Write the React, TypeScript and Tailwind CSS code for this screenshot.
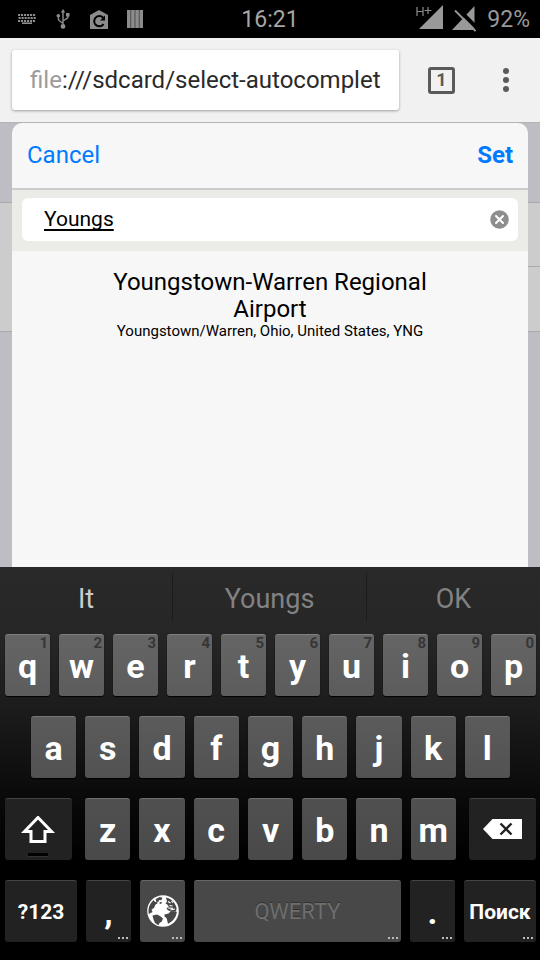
import type { ReactNode } from "react";

const topRow = ["q", "w", "e", "r", "t", "y", "u", "i", "o", "p"];
const homeRow = ["a", "s", "d", "f", "g", "h", "j", "k", "l"];
const bottomRow = ["z", "x", "c", "v", "b", "n", "m"];

function KeyboardIcon() {
  return (
    <svg width="18" height="10" viewBox="0 0 18 10" fill="#8c8c8c" aria-hidden="true">
      {[0, 3, 6].map((y, row) =>
        [0, 1, 2, 3, 4, 5].map((i) => (
          <rect key={`${y}-${i}`} x={i * 3 + (row === 1 ? 0.6 : 0)} y={y} width="2.1" height="2" />
        )),
      )}
      <rect x="4" y="8.4" width="10" height="1.6" />
    </svg>
  );
}

function UsbIcon() {
  return (
    <svg width="14" height="20" viewBox="0 0 14 20" fill="none" stroke="#8c8c8c" strokeWidth="1.4" aria-hidden="true">
      <path d="M7 17V3M7 14.5L2.5 11V7M7 12l4.8-3.2V6" />
      <path d="M7 0l2.2 3.4H4.8z" fill="#8c8c8c" stroke="none" />
      <circle cx="7" cy="17.4" r="2.4" fill="#8c8c8c" stroke="none" />
      <circle cx="2.3" cy="6.8" r="1.8" fill="#8c8c8c" stroke="none" />
      <path d="M10 4h3.5v3.5H10z" fill="#8c8c8c" stroke="none" />
    </svg>
  );
}

function HouseRefreshIcon() {
  return (
    <svg width="20" height="19" viewBox="0 0 20 19" aria-hidden="true">
      <path d="M1 5L10 0l9 5v14H1z" fill="#8c8c8c" />
      <path d="M14.200 7.600A5.200 5.200 0 1 0 14.600 14.200" fill="none" stroke="#000" strokeWidth="2" />
      <path d="M16 5.500v5h-5z" fill="#000" />
    </svg>
  );
}

function BarsIcon() {
  return (
    <svg width="16" height="18" viewBox="0 0 16 18" aria-hidden="true">
      <path d="M0 0h16v18H0z" fill="#5c5c5c" />
      <path d="M0 0h3v18H0zM4.300 0h3v18h-3zM8.600 0h3v18h-3zM13 0h3v18h-3z" fill="#8c8c8c" />
    </svg>
  );
}

function StatusBar() {
  return (
    <header className="grid h-[38px] grid-cols-[1fr_auto_1fr] items-center bg-black text-[23px] text-[#999]">
      <div className="flex items-center pl-[18px]">
        <KeyboardIcon />
        <span className="ml-5 flex"><UsbIcon /></span>
        <span className="ml-[19px] flex"><HouseRefreshIcon /></span>
        <span className="ml-[18px] flex"><BarsIcon /></span>
      </div>
      <time className="pt-[3px] text-[#a6a6a6]">16:21</time>
      <div className="flex items-center justify-end pr-[10px]">
        <svg width="28" height="26" viewBox="0 0 28 26" className="mb-[2px]" aria-label="H+ signal" role="img">
          <path d="M1 2v9M7 2v9M1 6.500h6M8.500 5.500h7M12 2v7" fill="none" stroke="#8c8c8c" strokeWidth="1.200" />
          <path d="M27 0v24H3z" fill="#999" />
        </svg>
        <svg width="24" height="26" viewBox="0 0 24 26" className="ml-2" aria-label="No signal" role="img">
          <path d="M22.500 0v24H0z" fill="#999" />
          <path d="M5.500 2.500L26 23" stroke="#000" strokeWidth="4" />
          <path d="M3 4.500L23.500 25" stroke="#999" strokeWidth="1.800" />
        </svg>
        <span className="ml-[11px] pt-[3px]">92%</span>
      </div>
    </header>
  );
}

function BrowserBar() {
  return (
    <div className="flex h-[84px] items-center bg-[#f1f1f1] pl-3 pr-6">
      <label className="flex h-[60px] min-w-0 flex-1 items-center rounded-[3px] bg-white pl-[18px] text-2xl shadow-[0_1px_3px_rgba(0,0,0,0.35)]">
        <span className="text-[#9b9b9b]">file</span>
        <input
          aria-label="Address"
          defaultValue=":///sdcard/select-autocomplet"
          className="h-full min-w-0 flex-1 bg-transparent text-[#2a2a2a] outline-none"
        />
      </label>
      <button
        aria-label="Open tabs"
        className="ml-[29px] flex h-[27px] w-[27px] items-center justify-center rounded-[3px] border-3 border-[#5a5a5a] text-lg font-bold leading-none text-[#5a5a5a]"
      >
        1
      </button>
      <button aria-label="Menu" className="ml-[41px] flex w-5 flex-col items-center gap-[3px]">
        <span className="h-[6px] w-[6px] rounded-full bg-[#5a5a5a]" />
        <span className="h-[6px] w-[6px] rounded-full bg-[#5a5a5a]" />
        <span className="h-[6px] w-[6px] rounded-full bg-[#5a5a5a]" />
      </button>
    </div>
  );
}

function Gutter({ divided = false }: { divided?: boolean }) {
  return (
    <div className="w-3 shrink-0 pt-[79px]">
      <div className="h-[130px] border-y border-[#a9a9ad] bg-[#ccc]">
        {divided && <div className="h-16 border-b border-[#a9a9ad]" />}
      </div>
    </div>
  );
}

function AirportPicker() {
  return (
    <main className="flex h-[445px] border-t border-[#b4b4b7] bg-[#bebdc3]">
      <Gutter />
      <section className="min-w-0 flex-1 rounded-t-[10px] bg-[#f7f7f7]">
        <div className="flex h-[67px] items-center justify-between border-b-2 border-[#cbcbcb] px-[15px] pb-[2px] text-2xl text-[#007aff]">
          <button>Cancel</button>
          <button className="font-bold">Set</button>
        </div>
        <div className="bg-[#ebece7] px-[10px] pb-[10px] pt-2">
          <div className="flex h-[43px] items-center rounded-md bg-white pr-[9px]">
            <input
              aria-label="Search airports"
              defaultValue="Youngs"
              className="mb-[2px] h-10 min-w-0 flex-1 bg-transparent pl-[22px] text-[21px] leading-10 text-black underline decoration-2 underline-offset-[3px] outline-none [text-decoration-skip-ink:none]"
            />
            <button aria-label="Clear search">
              <svg width="19" height="19" viewBox="0 0 19 19" aria-hidden="true">
                <circle cx="9.500" cy="9.500" r="9.300" fill="#8e8e8e" />
                <path d="M6 6l7 7M13 6l-7 7" stroke="#fff" strokeWidth="2" strokeLinecap="round" />
              </svg>
            </button>
          </div>
        </div>
        <ul className="pt-[18px]">
          <li className="px-20 text-center text-black">
            <h2 className="text-2xl leading-[27px]">Youngstown-Warren Regional Airport</h2>
            <p className="text-[15px] leading-4">Youngstown/Warren, Ohio, United States, YNG</p>
          </li>
        </ul>
      </section>
      <Gutter divided />
    </main>
  );
}

function MoreDots() {
  return (
    <span className="absolute bottom-[3px] right-[3px] flex gap-[2px]">
      <span className="h-[2px] w-[2px] bg-[#bbb]" />
      <span className="h-[2px] w-[2px] bg-[#bbb]" />
      <span className="h-[2px] w-[2px] bg-[#bbb]" />
    </span>
  );
}

type KeyProps = { children: ReactNode; label?: string; tone?: string; size?: string; text?: string; more?: boolean };

const topTone = "bg-linear-to-b from-[#656565] to-[#5c5c5c] border-[#808080]";
const homeTone = "bg-linear-to-b from-[#5b5b5b] to-[#525252] border-[#787878]";
const bottomTone = "bg-linear-to-b from-[#505050] to-[#494949] border-[#6e6e6e]";
const spaceTone = "bg-[#484848] border-[#666]";
const darkTone = "bg-[#222] border-[#444]";

function Key({
  children,
  label,
  tone = topTone,
  size = "min-w-0 flex-1",
  text = "pt-px text-[34px]",
  more = false,
}: KeyProps) {
  return (
    <button
      aria-label={label}
      className={`relative flex h-[62px] items-center justify-center rounded-[3px] border-t font-bold leading-none text-white shadow-[0_1px_1px_#000] ${tone} ${size} ${text}`}
    >
      {children}
      {more && <MoreDots />}
    </button>
  );
}

function GlobeIcon() {
  return (
    <svg width="32" height="32" viewBox="0 0 32 32" aria-hidden="true">
      <circle cx="16" cy="16" r="15.800" fill="#fff" />
      <g fill="#484848">
        <path d="M4 8l2.500-3 1.500 2 2-.5.5 2-2 1-1.500 3.500-2.500 1.500 1 2.500-3.700 2A14 14 0 0 1 4 8z" />
        <path d="M8.500 4.200L12.500 2l3 .8-1.200 2.400-2.300-.2-.5 2-2-.3zM12.500 7.500l2-.8.3 1.600-2 .9z" />
        <path d="M19 2.500c5 1 9.200 5 10.600 10.500L29 16.500l-4.500.3-3.500-1.500-1.500-1.800 2.300-2-1.800-2.300-1.500-.4 1.500-2.300z" />
        <path d="M5.500 20.500l4.500-1 3 1.500 3 2.500-1.200 3-2.300 1.500-1 2.200L8 28l-1.500-3.500z" />
        <path d="M17.500 19.500l4-1 2.500-2.500 5.800.8c-.2 4.700-3.600 9.600-8.800 12l-.8-3.300-.7-2.500-2-1.500z" />
      </g>
      <path d="M21 6.500l2.500 1.500M24.500 6.200l1.500 1.500M21 13l5 .4M23.500 15l4.500-1M22.500 10.500l3 .5" stroke="#fff" strokeWidth="1.200" />
    </svg>
  );
}

function Keyboard() {
  return (
    <section aria-label="Keyboard" className="bg-[linear-gradient(#292929,#272727_15%,#1c1c1c_36%,#0a0a0a_58%,#000_75%)] pb-[18px]">
      <div className="grid h-[67px] grid-cols-[173fr_194fr_173fr] pb-[13px] pt-[6px] text-center text-[27px] text-[#828282]">
        <button className="border-r border-[#1b1b1b] pt-1 text-[#ccc]">It</button>
        <button className="border-r border-[#1b1b1b] pt-1">Youngs</button>
        <button className="pt-1">OK</button>
      </div>
      <div className="flex flex-col gap-5 pl-[5px] pr-1">
        <div className="flex gap-[9px]">
          {topRow.map((letter, i) => (
            <Key key={letter} label={letter}>
              {letter}
              <span className="absolute right-[2px] top-px text-[15px] text-[#363636]">{(i + 1) % 10}</span>
            </Key>
          ))}
        </div>
        <div className="flex gap-[9px] px-[26px]">
          {homeRow.map((letter) => (
            <Key key={letter} tone={homeTone}>{letter}</Key>
          ))}
        </div>
        <div className="flex gap-[13px]">
          <Key label="Shift" size="w-[67px]" tone={darkTone} text="p-0">
            <svg width="36" height="28" viewBox="0 0 36 28" fill="none" stroke="#fff" strokeWidth="3" aria-hidden="true">
              <path d="M17 1.500L30.500 15.500H24v10H10v-10H3.500z" />
            </svg>
            <span className="absolute bottom-[3px] left-[23px] h-1 w-5 border-b border-[#333] bg-black" />
          </Key>
          <div className="flex flex-1 gap-[9px]">
            {bottomRow.map((letter) => (
              <Key key={letter} tone={bottomTone}>{letter}</Key>
            ))}
          </div>
          <Key label="Backspace" size="w-[67px]" tone={darkTone} text="pb-px">
            <svg width="40" height="20" viewBox="0 0 40 20" aria-hidden="true">
              <path d="M0 10L9.500 0H39v20H9.500z" fill="#fff" />
              <path d="M17.500 4.500l11 11M28.500 4.500l-11 11" stroke="#222" strokeWidth="2.400" />
            </svg>
          </Key>
        </div>
        <div className="flex gap-[9px]">
          <Key size="w-[72px]" tone={darkTone} text="pt-px text-[21px]">?123</Key>
          <Key size="w-[45px]" tone={darkTone} more>,</Key>
          <Key label="Change language" size="w-[45px]" tone={spaceTone} text="pb-[2px]" more>
            <GlobeIcon />
          </Key>
          <Key size="flex-1" tone={spaceTone} text="text-[22px]" more>
            <span className="font-normal text-[#6e6e6e] [text-shadow:0_-1px_0_#333]">QWERTY</span>
          </Key>
          <Key size="w-[45px]" tone={darkTone} more>.</Key>
          <Key size="w-[72px]" tone={darkTone} text="pt-px text-[21px]" more>Поиск</Key>
        </div>
      </div>
    </section>
  );
}

export default function App() {
  return (
    <div className="min-h-screen bg-black font-[Roboto,'Noto_Sans',sans-serif]">
      <StatusBar />
      <BrowserBar />
      <AirportPicker />
      <Keyboard />
    </div>
  );
}
